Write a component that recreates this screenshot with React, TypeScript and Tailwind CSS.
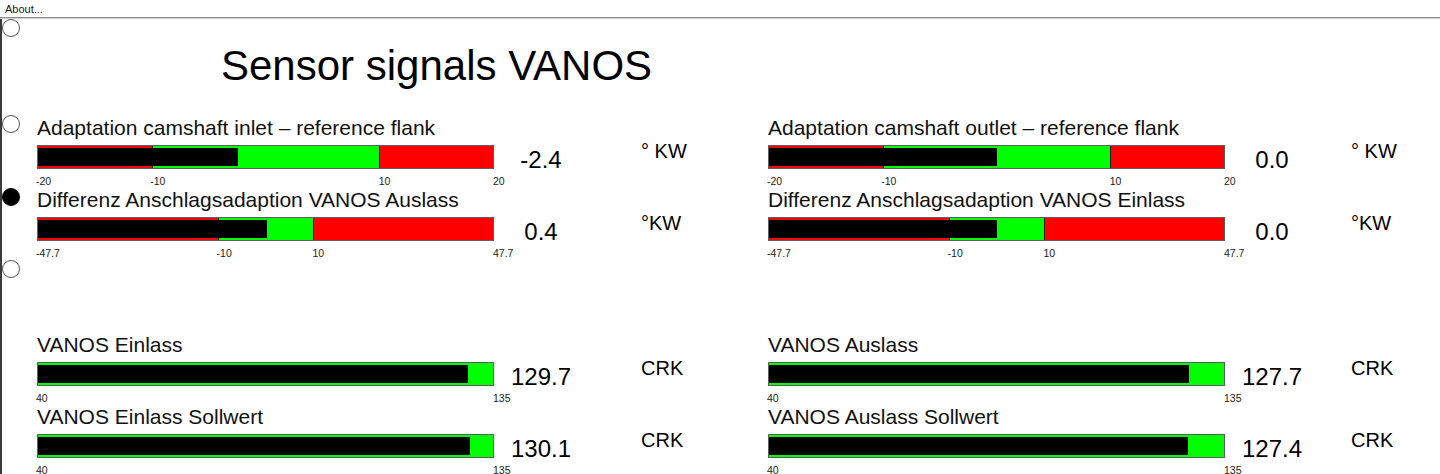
import React from "react";

type Seg = { from: number; to: number; color: string };
type RowData = {
  label: string;
  min: number;
  max: number;
  segs: Seg[];
  value: number;
  text: string;
  unit: string;
  ticks: { v: number; t: string }[];
};

const RED = "#ff0000";
const GREEN = "#00ff00";
const BAR_W = 457;
const INNER_W = 455;

const adapt = (label: string, value: number, text: string): RowData => ({
  label,
  min: -20,
  max: 20,
  segs: [
    { from: -20, to: -10, color: RED },
    { from: -10, to: 10, color: GREEN },
    { from: 10, to: 20, color: RED },
  ],
  value,
  text,
  unit: "° KW",
  ticks: [
    { v: -20, t: "-20" },
    { v: -10, t: "-10" },
    { v: 10, t: "10" },
    { v: 20, t: "20" },
  ],
});

const diff = (label: string, value: number, text: string): RowData => ({
  label,
  min: -47.7,
  max: 47.7,
  segs: [
    { from: -47.7, to: -10, color: RED },
    { from: -10, to: 10, color: GREEN },
    { from: 10, to: 47.7, color: RED },
  ],
  value,
  text,
  unit: "°KW",
  ticks: [
    { v: -47.7, t: "-47.7" },
    { v: -10, t: "-10" },
    { v: 10, t: "10" },
    { v: 47.7, t: "47.7" },
  ],
});

const vanos = (label: string, value: number, text: string): RowData => ({
  label,
  min: 40,
  max: 135,
  segs: [{ from: 40, to: 135, color: GREEN }],
  value,
  text,
  unit: "CRK",
  ticks: [
    { v: 40, t: "40" },
    { v: 135, t: "135" },
  ],
});

function Bar({ d }: { d: RowData }) {
  const span = d.max - d.min;
  const frac = Math.max(0, Math.min(1, (d.value - d.min) / span));
  return (
    <div className="relative flex w-[457px] h-[24px] border border-[#5e5e5e] overflow-hidden">
      {d.segs.map((s, i) => (
        <div
          key={i}
          className={i === 0 ? "h-full" : "h-full border-l border-[#1a1a1a]"}
          style={{ width: ((s.to - s.from) / span) * INNER_W, backgroundColor: s.color }}
        />
      ))}
      <div
        className="absolute left-0 top-[2px] bottom-[2px] bg-black"
        style={{ width: frac * INNER_W }}
      />
    </div>
  );
}

function Row({ d, right }: { d: RowData; right: boolean }) {
  const span = d.max - d.min;
  return (
    <div className="flex items-start h-[72px]">
      <div className="flex flex-col w-[457px] shrink-0">
        <div className="text-[21px] leading-[24px] whitespace-nowrap text-[#111]">{d.label}</div>
        <div className="mt-[5px]">
          <Bar d={d} />
        </div>
        <div className="relative mt-[6px] h-[12px] text-[10.5px] leading-[12px] text-[#222]">
          {d.ticks.map((t, i) => (
            <span
              key={i}
              className="absolute top-0 whitespace-nowrap"
              style={{ left: ((t.v - d.min) / span) * BAR_W - 1 }}
            >
              {t.t}
            </span>
          ))}
        </div>
      </div>
      <div className="w-[94px] shrink-0 mt-[32px] text-center text-[24px] leading-[24px] text-black">
        {d.text}
      </div>
      <div
        className={
          right
            ? "ml-[32px] mt-[23px] text-[20px] leading-[24px] whitespace-nowrap text-black"
            : "ml-[53px] mt-[23px] text-[20px] leading-[24px] whitespace-nowrap text-black"
        }
      >
        {d.unit}
      </div>
    </div>
  );
}

function Radio({ checked, className }: { checked?: boolean; className: string }) {
  return (
    <div
      className={
        (checked
          ? "w-[18px] h-[18px] rounded-full border border-black bg-black "
          : "w-[18px] h-[18px] rounded-full border border-[#555] bg-white ") + className
      }
    />
  );
}

export default function App() {
  const group1L = [
    adapt("Adaptation camshaft inlet – reference flank", -2.4, "-2.4"),
    diff("Differenz Anschlagsadaption VANOS Auslass", 0.4, "0.4"),
  ];
  const group1R = [
    adapt("Adaptation camshaft outlet – reference flank", 0.0, "0.0"),
    diff("Differenz Anschlagsadaption VANOS Einlass", 0.0, "0.0"),
  ];
  const group2L = [
    vanos("VANOS Einlass", 129.7, "129.7"),
    vanos("VANOS Einlass Sollwert", 130.1, "130.1"),
  ];
  const group2R = [
    vanos("VANOS Auslass", 127.7, "127.7"),
    vanos("VANOS Auslass Sollwert", 127.4, "127.4"),
  ];

  return (
    <div className="w-[1440px] h-[474px] overflow-hidden bg-white font-['Liberation_Sans',Arial,sans-serif] text-black">
      <div className="h-[17px] pl-[5px] pt-[3px] text-[11px] leading-[12px] text-[#1a1a1a]">About...</div>
      <div className="h-[1px] bg-[#8c8c8c]" />
      <div className="h-[1px] bg-[#d2d2d2]" />
      <div className="flex h-[455px] border-l-2 border-[#3a3a3a]">
        <div className="w-[35px] shrink-0 flex flex-col">
          <Radio className="" />
          <Radio className="mt-[78px]" />
          <Radio checked className="mt-[55px]" />
          <Radio className="mt-[54px]" />
        </div>
        <div className="flex flex-col pt-[23px]">
          <div className="ml-[184px] h-[48px] text-[42px] leading-[48px] whitespace-nowrap">
            Sensor signals VANOS
          </div>
          <div className="mt-[26px] grid grid-cols-[731px_auto]">
            <div className="flex flex-col">
              {group1L.map((d, i) => (
                <Row key={i} d={d} right={false} />
              ))}
            </div>
            <div className="flex flex-col">
              {group1R.map((d, i) => (
                <Row key={i} d={d} right={true} />
              ))}
            </div>
          </div>
          <div className="mt-[73px] grid grid-cols-[731px_auto]">
            <div className="flex flex-col">
              {group2L.map((d, i) => (
                <Row key={i} d={d} right={false} />
              ))}
            </div>
            <div className="flex flex-col">
              {group2R.map((d, i) => (
                <Row key={i} d={d} right={true} />
              ))}
            </div>
          </div>
        </div>
      </div>
    </div>
  );
}
